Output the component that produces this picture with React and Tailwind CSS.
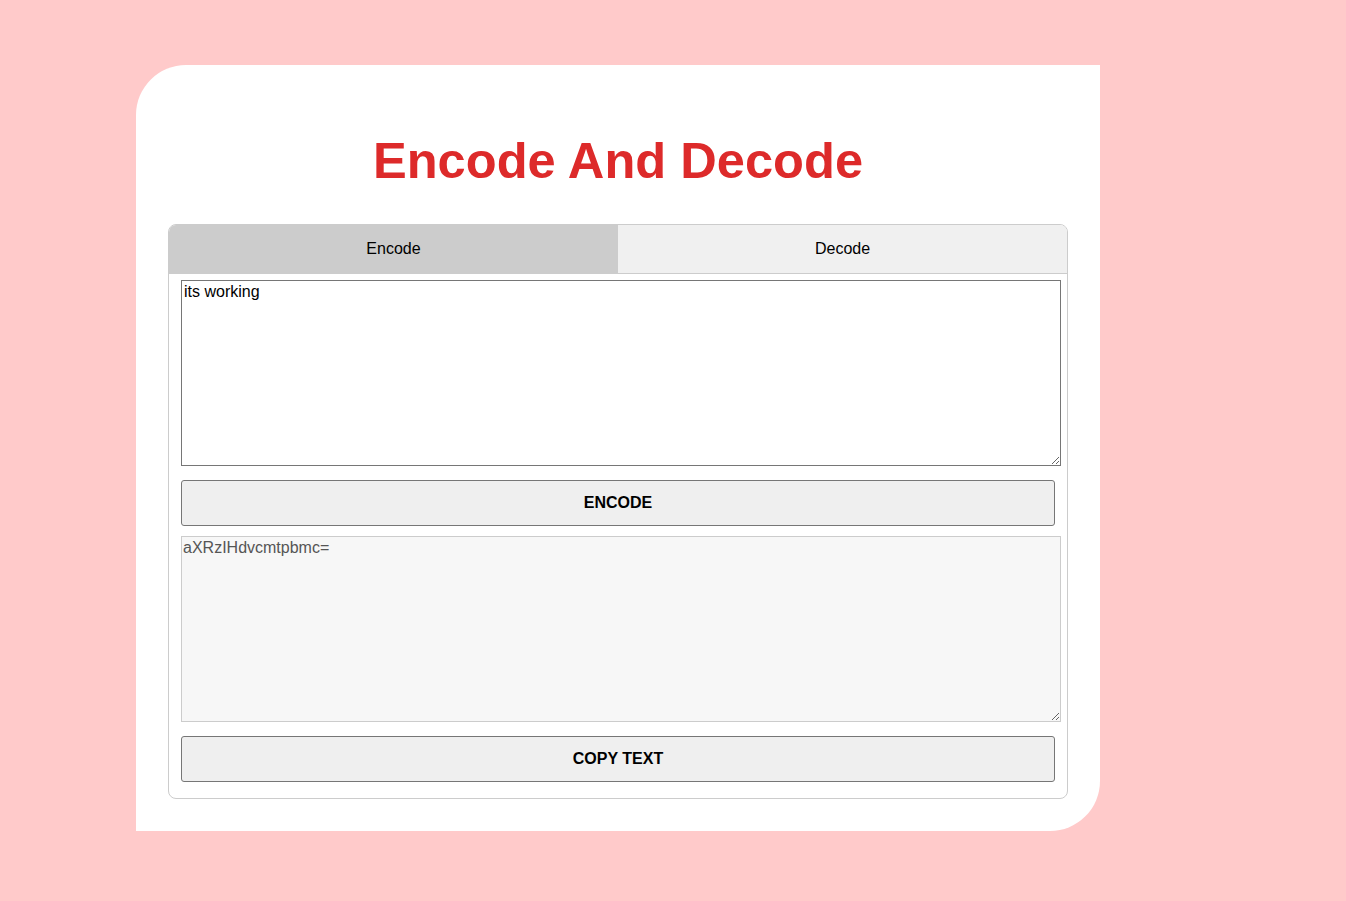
import React, { useState } from 'react';

const App = () => {
  const [tab, setTab] = useState('encode');
  const [input, setInput] = useState('its working');
  const [output, setOutput] = useState('aXRzIHdvcmtpbmc=');

  const handleRun = () => {
    try {
      setOutput(tab === 'encode' ? btoa(input) : atob(input));
    } catch (e) {
      setOutput('');
    }
  };

  return (
    <div className="min-h-[901px] w-full bg-[#ffcaca] font-['Liberation_Sans',Arial,sans-serif] pt-[65px] pl-[136px]">
      <div className="w-[964px] h-[766px] bg-white rounded-tl-[50px] rounded-br-[50px] px-[32px] pt-[66px]">
        <h1 className="text-center text-[50.6px] leading-[60px] font-bold text-[#dd2a2a] mb-[33px]">
          Encode And Decode
        </h1>

        <div className="border border-[#cccccc] rounded-[8px] overflow-hidden">
          <div className="flex border-b border-[#cccccc]">
            <button
              onClick={() => setTab('encode')}
              className={`flex-1 h-[48px] text-[16px] text-black ${tab === 'encode' ? 'bg-[#cccccc]' : 'bg-[#f0f0f0]'}`}
            >
              Encode
            </button>
            <button
              onClick={() => setTab('decode')}
              className={`flex-1 h-[48px] text-[16px] text-black ${tab === 'decode' ? 'bg-[#cccccc]' : 'bg-[#f0f0f0]'}`}
            >
              Decode
            </button>
          </div>

          <div className="px-[12px] pt-[6px] pb-[16px]">
            <textarea
              value={input}
              onChange={(e) => setInput(e.target.value)}
              className="block w-[880px] h-[186px] border border-[#767676] p-[2px] text-[16px] leading-[18px] text-black bg-white outline-none"
            />
            <button
              onClick={handleRun}
              className="block w-full h-[46px] mt-[14px] border border-[#767676] rounded-[3px] bg-[#efefef] text-[16px] font-bold text-black uppercase"
            >
              {tab === 'encode' ? 'Encode' : 'Decode'}
            </button>
            <textarea
              readOnly
              value={output}
              className="block w-[880px] h-[186px] mt-[10px] border border-[#cccccc] p-[2px] pl-[1px] text-[16px] leading-[18px] text-[#555555] bg-[#f7f7f7] outline-none"
            />
            <button
              onClick={() => navigator.clipboard?.writeText(output)}
              className="block w-full h-[46px] mt-[14px] border border-[#767676] rounded-[3px] bg-[#efefef] text-[16px] font-bold text-black uppercase"
            >
              Copy Text
            </button>
          </div>
        </div>
      </div>
    </div>
  );
};

export default App;
